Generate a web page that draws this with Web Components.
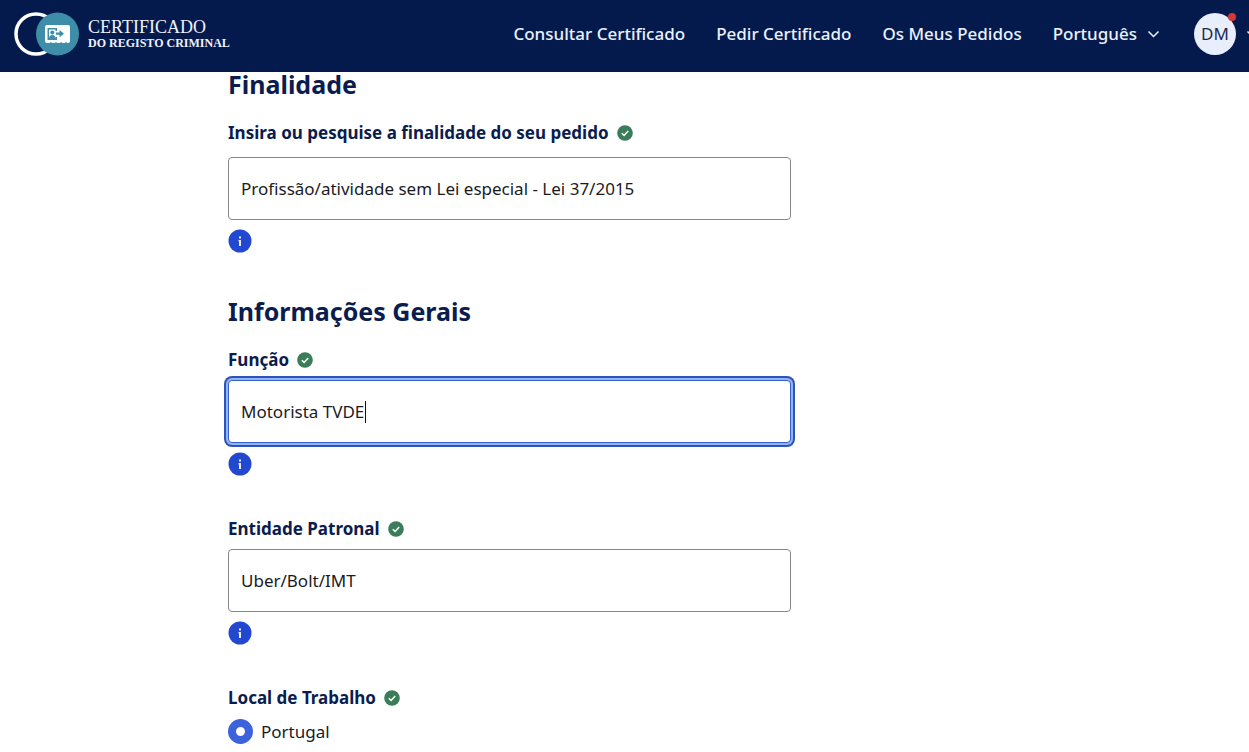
<!DOCTYPE html>
<html lang="pt">
<head>
<meta charset="utf-8">
<meta name="viewport" content="width=device-width, initial-scale=1">
<title>Certificado do Registo Criminal</title>
<style>
  body { margin: 0; background: #fff; color: #1b1b1f; font: 17px/24px "Noto Sans", sans-serif; overflow-x: hidden; }
  main { max-width: 793px; margin: 0 auto; }
</style>
</head>
<body>
<site-header>
  <site-logo slot="logo"></site-logo>
  <nav-link href="#consultar">Consultar Certificado</nav-link>
  <nav-link href="#pedir">Pedir Certificado</nav-link>
  <nav-link href="#pedidos">Os Meus Pedidos</nav-link>
  <language-menu>Português</language-menu>
  <user-menu slot="user">DM</user-menu>
</site-header>
<main>
  <form-section heading="Finalidade">
    <text-field style="--label-gap: 12px" label="Insira ou pesquise a finalidade do seu pedido" value="Profissão/atividade sem Lei especial - Lei 37/2015"></text-field>
  </form-section>
  <form-section heading="Informações Gerais">
    <text-field label="Função" value="Motorista TVDE" active></text-field>
    <text-field label="Entidade Patronal" value="Uber/Bolt/IMT"></text-field>
    <radio-group label="Local de Trabalho" option="Portugal"></radio-group>
  </form-section>
</main>
<script>
const define = (name, html, setup) => customElements.define(name, class extends HTMLElement {
  connectedCallback() {
    if (this.shadowRoot) return;
    const root = this.attachShadow({ mode: "open" });
    root.innerHTML = html;
    if (setup) setup(this, root);
  }
});

define("site-header", `
<style>
  :host { display: block; background: #051a4c; color: #eaf1ff; overflow: hidden; }
  header { display: flex; align-items: center; justify-content: space-between; height: 72px; box-sizing: border-box; padding: 0 0 4px 14px; }
  nav, .right { display: flex; align-items: center; }
  nav { gap: 31px; }
  .right { gap: 34px; }
</style>
<header><slot name="logo"></slot><div class="right"><nav><slot></slot></nav><slot name="user"></slot></div></header>`);

define("site-logo", `
<style>
  :host { display: block; }
  a { display: flex; align-items: center; gap: 9px; color: #eef3fb; text-decoration: none; }
  svg { display: block; }
  .name { display: flex; flex-direction: column; font-family: "Liberation Serif", serif; }
  .top { font-size: 18px; line-height: 18px; }
  .bottom { font-size: 12px; line-height: 14px; font-weight: 700; }
</style>
<a href="#inicio">
  <svg width="65" height="44" viewBox="0 0 65 44" aria-hidden="true">
    <circle cx="22" cy="22" r="20" fill="none" stroke="#fff" stroke-width="3.500"/>
    <circle cx="43.500" cy="22" r="21.500" fill="#3e8ea9"/>
    <path d="M31 15q0-2 2-2h21q2 0 2 2v14q0 2-2 2h-1q-1-2-2 0h-3q-1-2-2 0h-3q-1-2-2 0h-3q-1-2-2 0h-3q-2 0-2-2z" fill="#fff"/>
    <path d="M33.500 16h9.500v3h-1.500v-1.500H35v9h6.500V25H43v3h-9.500z" fill="#3e8ea9"/>
    <circle cx="38.300" cy="20.500" r="2" fill="#3e8ea9"/>
    <path d="M35 27q0-4 3.300-4t3.300 4z" fill="#3e8ea9"/>
    <path d="M42 20.500h3.500v-2.500l4.500 3.700-4.500 3.600v-2.500H42z" fill="#3e8ea9"/>
  </svg>
  <span class="name"><span class="top">CERTIFICADO</span><span class="bottom">DO REGISTO CRIMINAL</span></span>
</a>`);

define("nav-link", `
<style>
  :host { display: block; }
  a { color: inherit; text-decoration: none; font-weight: 500; white-space: nowrap; }
</style>
<a><slot></slot></a>`, (host, root) => { root.querySelector("a").href = host.getAttribute("href"); });

define("language-menu", `
<style>
  :host { display: block; }
  button { all: unset; display: flex; align-items: center; gap: 10px; font-weight: 500; cursor: pointer; }
</style>
<button type="button"><slot></slot><svg width="13" height="8" viewBox="0 0 13 8" aria-hidden="true"><path d="M1.500 1.500l5 5 5-5" fill="none" stroke="currentColor" stroke-width="1.500"/></svg></button>`);

define("user-menu", `
<style>
  :host { display: block; margin-right: -10px; }
  button { all: unset; display: flex; align-items: center; gap: 10px; cursor: pointer; }
  .avatar { position: relative; display: grid; place-items: center; width: 42px; height: 42px; border-radius: 50%; background: #e8eefc; color: #1d2b50; }
  .dot { position: absolute; top: 0; right: 0; width: 8px; height: 8px; border-radius: 50%; background: #cf3c38; }
</style>
<button type="button"><span class="avatar"><slot></slot><span class="dot"></span></span><svg width="13" height="8" viewBox="0 0 13 8" aria-hidden="true"><path d="M1.500 1.500l5 5 5-5" fill="none" stroke="currentColor" stroke-width="1.500"/></svg></button>`);

define("form-section", `
<style>
  :host { display: block; margin-bottom: 46px; }
  :host(:last-child) { margin-bottom: 0; }
  h2 { margin: 0 0 25px; font-size: 25px; line-height: 24px; font-weight: 700; color: #0b1c4e; }
  .fields { display: flex; flex-direction: column; gap: 41px; }
</style>
<section><h2></h2><div class="fields"><slot></slot></div></section>`, (host, root) => {
  root.querySelector("h2").textContent = host.getAttribute("heading");
});

define("check-mark", `
<style>:host { display: block; } svg { display: block; }</style>
<svg width="16" height="16" viewBox="0 0 16 16" aria-hidden="true"><circle cx="8" cy="8" r="7.800" fill="#3a7d58"/><path d="M4.800 8.200l2.300 2.200 4.100-4.300" fill="none" stroke="#fff" stroke-width="1.500"/></svg>`);

define("info-button", `
<style>
  :host { display: block; }
  button { all: unset; display: block; width: 24px; height: 24px; cursor: pointer; }
  svg { display: block; }
</style>
<button type="button" aria-label="Mais informação"><svg width="24" height="24" viewBox="0 0 24 24" aria-hidden="true"><circle cx="12" cy="12" r="11.500" fill="#2148cf"/><path d="M11 7.500h2v2h-2zM10.500 11h2.500v6h-2v-4.500h-.500z" fill="#e6edff"/></svg></button>`);

define("text-field", `
<style>
  :host { display: block; width: 71%; }
  .head { display: flex; align-items: center; gap: 8px; margin-bottom: var(--label-gap, 8px); }
  label { font-weight: 700; color: #0b1c4e; }
  input { display: block; box-sizing: border-box; width: 100%; height: 63px; margin: 0 0 9px; padding: 0 12px; border: 1px solid #85878e; border-radius: 4px; background: #fff; color: #1b1b1f; font: 17px/24px "Noto Sans", sans-serif; outline: none; }
  :host([active]) input { border-color: #3460cf; box-shadow: 0 0 0 2px #94b2f6, 0 0 0 4px #2f54b5; background: linear-gradient(#111, #111) 136px center / 1px 22px no-repeat #fff; caret-color: transparent; }
</style>
<div class="head"><label for="field"></label><check-mark></check-mark></div>
<input id="field" type="text">
<info-button></info-button>`, (host, root) => {
  root.querySelector("label").textContent = host.getAttribute("label");
  root.querySelector("input").value = host.getAttribute("value");
});

define("radio-group", `
<style>
  :host { display: block; }
  fieldset { margin: 0; padding: 0; border: 0; min-width: 0; }
  legend { display: flex; align-items: center; gap: 8px; padding: 0; margin-bottom: 9px; font-weight: 700; color: #0b1c4e; }
  label { display: flex; align-items: center; gap: 8px; }
  input { appearance: none; box-sizing: border-box; width: 25px; height: 25px; margin: 0; border: 8px solid #3d63dc; border-radius: 50%; background: #fff; }
</style>
<fieldset><legend><span></span><check-mark></check-mark></legend>
<label><input type="radio" name="local" checked><span class="option"></span></label></fieldset>`, (host, root) => {
  root.querySelector("legend span").textContent = host.getAttribute("label");
  root.querySelector(".option").textContent = host.getAttribute("option");
});
</script>
</body>
</html>
